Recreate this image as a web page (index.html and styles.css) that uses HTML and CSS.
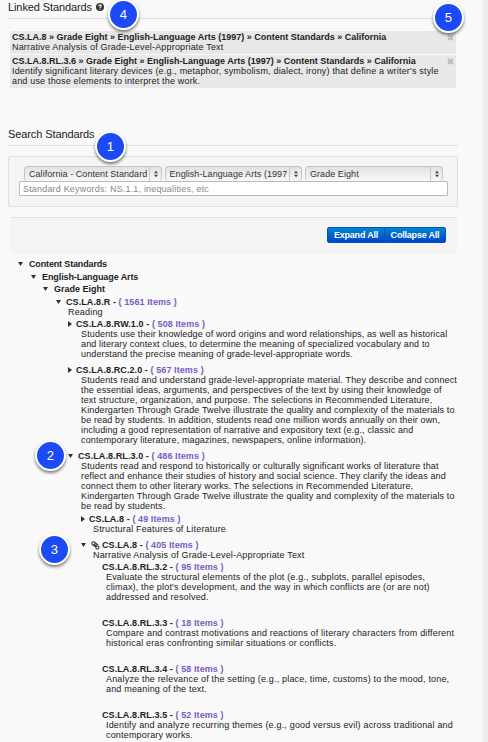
FILE: index.html
```
<!DOCTYPE html>
<html lang="en">
<head>
    <meta charset="UTF-8">
    <meta name="viewport" content="width=device-width, initial-scale=1.0">
    <title>Standards</title>
    <link rel="stylesheet" href="styles.css">
</head>
<body>
    <div class="page">
        <h2 class="heading">Linked Standards
            <svg class="help" viewBox="0 0 8 8"><circle cx="4" cy="4" r="4" fill="#333"/><path d="M2.7 3.2Q2.8 1.9 4 1.9T5.3 3Q5.3 3.6 4.6 4T4 4.9M4 5.6V6.6" fill="none" stroke="#fff" stroke-width="1.1"/></svg>
        </h2>
        <div class="linked">
            <div class="linked-item">
                <div><b>CS.LA.8 » Grade Eight » English-Language Arts (1997) » Content Standards » California</b><br>Narrative Analysis of Grade-Level-Appropriate Text</div>
                <svg class="remove" viewBox="0 0 8 8"><path d="M1.2 1.2L6.8 6.8M6.8 1.2L1.2 6.8"/></svg>
            </div>
            <div class="linked-item">
                <div><b>CS.LA.8.RL.3.6 » Grade Eight » English-Language Arts (1997) » Content Standards » California</b><br>Identify significant literary devices (e.g., metaphor, symbolism, dialect, irony) that define a writer's style<br>and use those elements to interpret the work.</div>
                <svg class="remove" viewBox="0 0 8 8"><path d="M1.2 1.2L6.8 6.8M6.8 1.2L1.2 6.8"/></svg>
            </div>
        </div>

        <h2 class="heading search-heading">Search Standards</h2>
        <div class="search">
            <div class="selects">
                <div class="select"><span>California - Content Standards</span><svg viewBox="0 0 5 8"><path d="M0 3L2.5 0L5 3ZM0 5L2.5 8L5 5Z"/></svg></div>
                <div class="select"><span>English-Language Arts (1997)</span><svg viewBox="0 0 5 8"><path d="M0 3L2.5 0L5 3ZM0 5L2.5 8L5 5Z"/></svg></div>
                <div class="select"><span>Grade Eight</span><svg viewBox="0 0 5 8"><path d="M0 3L2.5 0L5 3ZM0 5L2.5 8L5 5Z"/></svg></div>
            </div>
            <input class="keywords" type="text" placeholder="Standard Keywords: NS.1.1, inequalities, etc">
        </div>

        <div class="toolbar">
            <button class="btn">Expand All</button><button class="btn">Collapse All</button>
        </div>

        <div class="tree">
            <div class="node root"><i class="arrow down"></i><b>Content Standards</b></div>
            <div class="node subject"><i class="arrow down"></i><b>English-Language Arts</b></div>
            <div class="node grade"><i class="arrow down"></i><b>Grade Eight</b></div>
            <div class="node strand"><i class="arrow down"></i><b>CS.LA.8.R - <a>( 1561 Items )</a></b></div>
            <p class="desc strand-desc">Reading</p>

            <div class="node topic first"><i class="arrow right"></i><b>CS.LA.8.RW.1.0 - <a>( 508 Items )</a></b></div>
            <p class="desc topic-desc">Students use their knowledge of word origins and word relationships, as well as historical<br>and literary context clues, to determine the meaning of specialized vocabulary and to<br>understand the precise meaning of grade-level-appropriate words.</p>
            <div class="node topic"><i class="arrow right"></i><b>CS.LA.8.RC.2.0 - <a>( 567 Items )</a></b></div>
            <p class="desc topic-desc">Students read and understand grade-level-appropriate material. They describe and connect<br>the essential ideas, arguments, and perspectives of the text by using their knowledge of<br>text structure, organization, and purpose. The selections in Recommended Literature,<br>Kindergarten Through Grade Twelve illustrate the quality and complexity of the materials to<br>be read by students. In addition, students read one million words annually on their own,<br>including a good representation of narrative and expository text (e.g., classic and<br>contemporary literature, magazines, newspapers, online information).</p>
            <div class="node topic open"><i class="arrow down"></i><b>CS.LA.8.RL.3.0 - <a>( 486 Items )</a></b></div>
            <p class="desc topic-desc">Students read and respond to historically or culturally significant works of literature that<br>reflect and enhance their studies of history and social science. They clarify the ideas and<br>connect them to other literary works. The selections in Recommended Literature,<br>Kindergarten Through Grade Twelve illustrate the quality and complexity of the materials to<br>be read by students.</p>

            <div class="node group"><i class="arrow right"></i><b>CS.LA.8 - <a>( 49 Items )</a></b></div>
            <p class="desc group-desc">Structural Features of Literature</p>
            <div class="node group linked-group"><i class="arrow down"></i><svg class="link" viewBox="0 0 9 9"><g fill="none" stroke="#333" stroke-width="1.1"><circle cx="2.4" cy="2.4" r="1.6"/><circle cx="6.4" cy="6.6" r="1.6"/><path d="M3.9 1.8L6.6 3.4L5 4.4M2 4L4.9 5.9M3.3 3.3L5.4 5.6"/></g></svg><b>CS.LA.8 - <a>( 405 Items )</a></b></div>
            <p class="desc group-desc">Narrative Analysis of Grade-Level-Appropriate Text</p>

            <div class="node leaf first"><b>CS.LA.8.RL.3.2 - <a>( 95 Items )</a></b></div>
            <p class="desc leaf-desc">Evaluate the structural elements of the plot (e.g., subplots, parallel episodes,<br>climax), the plot's development, and the way in which conflicts are (or are not)<br>addressed and resolved.</p>
            <div class="node leaf"><b>CS.LA.8.RL.3.3 - <a>( 18 Items )</a></b></div>
            <p class="desc leaf-desc">Compare and contrast motivations and reactions of literary characters from different<br>historical eras confronting similar situations or conflicts.</p>
            <div class="node leaf"><b>CS.LA.8.RL.3.4 - <a>( 58 Items )</a></b></div>
            <p class="desc leaf-desc">Analyze the relevance of the setting (e.g., place, time, customs) to the mood, tone,<br>and meaning of the text.</p>
            <div class="node leaf"><b>CS.LA.8.RL.3.5 - <a>( 52 Items )</a></b></div>
            <p class="desc leaf-desc">Identify and analyze recurring themes (e.g., good versus evil) across traditional and<br>contemporary works.</p>
        </div>

        <!-- numbered callouts on top of the page -->
        <span class="callout c1">1</span>
        <span class="callout c2">2</span>
        <span class="callout c3">3</span>
        <span class="callout c4">4</span>
        <span class="callout c5">5</span>
    </div>
</body>
</html>
```
FILE: styles.css
```
* {
    box-sizing: border-box;
}
body {
    margin: 0;
    height: 742px;
    overflow: hidden;
    background-color: #ededed;
    font-family: "Liberation Sans", Arial, sans-serif;
    font-size: 9px;
    line-height: 10px;
    color: #222;
}
.page {
    position: relative;
    width: 483px;
    height: 742px;
    background-color: #f9f9f9;
    white-space: nowrap;
    letter-spacing: 0.18px;
}
.heading {
    display: flex;
    align-items: center;
    gap: 4px;
    width: 450px;
    height: 19px;
    margin: 0 0 0 8px;
    padding-bottom: 4px;
    border-bottom: 1px solid #e0e0e0;
    font-size: 11px;
    font-weight: normal;
    letter-spacing: -0.1px;
}
.search-heading {
    margin-top: 39px;
}
.help {
    width: 8px;
    height: 8px;
}
.linked {
    display: flex;
    flex-direction: column;
    gap: 1px;
    width: 446px;
    margin: 12px 0 0 10px;
}
.linked-item {
    display: flex;
    justify-content: space-between;
    padding: 1px 2px 2px;
    background-color: #e8e8e8;
}
.linked-item b {
    letter-spacing: 0;
}
.remove {
    width: 7px;
    height: 7px;
    margin: 2px 0 0;
    fill: none;
    stroke: #bbb;
    stroke-width: 2.4;
}
.search {
    width: 450px;
    height: 51px;
    margin: 10px 0 0 8px;
    padding: 9px 9px 0 10px;
    border: 1px solid #e0e0e0;
    border-radius: 2px;
    background-color: #f5f5f5;
}
.selects {
    display: flex;
    gap: 3px;
    padding-left: 5px;
}
.select {
    display: flex;
    align-items: center;
    width: 137.5px;
    height: 15px;
    padding: 0 3px 0 4px;
    border: 1px solid #c4c4c4;
    border-width: 1px 1px 0;
    border-radius: 4px;
    background: linear-gradient(#e2e2e2, #f8f8f8);
    color: #333;
    letter-spacing: 0.06px;
}
.select span {
    flex: 1;
    overflow: hidden;
}
.select svg {
    width: 9px;
    height: 14px;
    margin-left: 2px;
    padding: 3px 0 3px 4px;
    border-left: 1px solid #c8c8c8;
    fill: #444;
}
.keywords {
    display: block;
    width: 429px;
    height: 15px;
    padding: 0 3px;
    border: 1px solid #bbb;
    border-radius: 1px;
    font: inherit;
    letter-spacing: 0.18px;
}
.keywords::placeholder {
    color: #888;
}
.toolbar {
    display: flex;
    justify-content: flex-end;
    width: 446px;
    height: 37px;
    margin: 10px 0 0 11px;
    padding: 9px 11px 0 0;
    border-top: 1px solid #e0e0e0;
    background-color: #f4f4f4;
}
.btn {
    width: 58px;
    height: 16px;
    padding: 0;
    border: 1px solid #0055b8;
    border-radius: 2px 0 0 2px;
    background: linear-gradient(#0088cc, #0044cc);
    color: #fff;
    font: inherit;
    font-weight: bold;
    letter-spacing: -0.2px;
}
.btn + .btn {
    width: 62px;
    margin-left: -1px;
    border-radius: 0 2px 2px 0;
}
.tree {
    padding-top: 5px;
}
.node {
    display: flex;
    align-items: center;
    height: 10px;
    letter-spacing: 0.09px;
}
.node a {
    color: #7a5cc4;
}
.desc {
    margin: 0;
}
.arrow {
    flex: none;
    width: 5px;
    height: 4px;
    margin-right: 6px;
    background-color: #333;
    clip-path: polygon(0 0, 100% 0, 50% 100%);
}
.arrow.right {
    width: 4px;
    height: 6px;
    margin-right: 4px;
    clip-path: polygon(0 0, 100% 50%, 0 100%);
}
.root {
    padding-left: 18px;
    letter-spacing: -0.15px;
}
.subject {
    margin-top: 3px;
    padding-left: 31px;
    letter-spacing: -0.09px;
}
.grade {
    margin-top: 2px;
    padding-left: 43px;
    letter-spacing: 0;
}
.strand {
    margin-top: 3px;
    padding-left: 56px;
}
.strand .arrow,
.topic.open .arrow {
    margin-right: 5px;
}
.strand-desc {
    padding-left: 68px;
}
.topic {
    margin-top: 6px;
    padding-left: 68px;
}
.topic.first {
    margin-top: 2px;
}
.topic-desc {
    padding-left: 81px;
    letter-spacing: 0.135px;
}
.group {
    margin-top: 3px;
    padding-left: 81px;
}
.linked-group {
    margin-top: 6px;
}
.group-desc {
    padding-left: 93px;
}
.link {
    width: 9px;
    height: 9px;
    margin: 0 2px 0 -1px;
}
.leaf {
    margin-top: 16px;
    padding-left: 102px;
}
.leaf.first {
    margin-top: 2px;
}
.leaf-desc {
    padding-left: 106px;
}
.callout {
    position: absolute;
    width: 31px;
    height: 31px;
    border: 2px solid #fff;
    border-radius: 50%;
    background-color: #1c4bf5;
    box-shadow: 0 2px 3px rgba(0, 0, 0, 0.5);
    color: #fff;
    font-size: 13px;
    line-height: 27px;
    text-align: center;
}
.c1 {
    left: 95px;
    top: 131px;
}
.c2 {
    left: 35px;
    top: 440px;
}
.c3 {
    left: 39px;
    top: 534px;
}
.c4 {
    left: 108px;
    top: -1px;
}
.c5 {
    left: 433px;
    top: 2px;
}
```
